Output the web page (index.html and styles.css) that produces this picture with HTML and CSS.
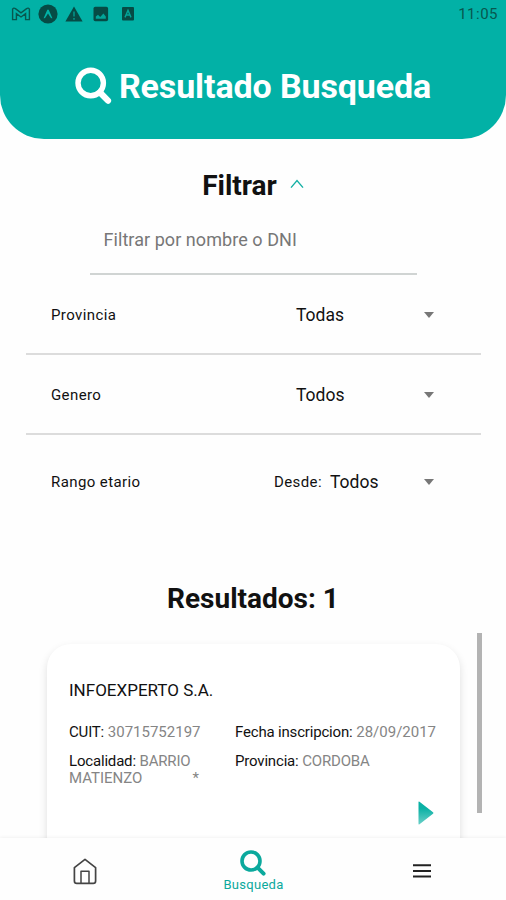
FILE: index.html
```html
<!DOCTYPE html>
<html lang="es">

<head>
  <meta charset="utf-8">
  <title>Resultado Busqueda</title>
  <link rel="stylesheet" href="styles.css">
</head>

<body>
  <div class="app">
    <header class="header">
      <div class="status">
        <div class="status-icons">
          <svg width="20" height="16" viewBox="0 0 20 16" fill="none" stroke="#07574f" stroke-width="1.4">
            <path d="M1.6 13.6V3.2Q2.6 1.4 4.4 2.6L10 6.8L15.6 2.6Q17.4 1.4 18.4 3.2V13.6H14.6V7.6L10 11L5.4 7.6V13.6Z" />
          </svg>
          <svg width="20" height="20" viewBox="0 0 20 20">
            <circle cx="10" cy="10" r="9.6" fill="#064b45" />
            <path d="M5.6 14.2L9.2 6Q10 5 10.8 6L14.4 14.2Q13 14.8 12.4 13.2L10 9.6L7.6 13.2Q7 14.8 5.6 14.2Z" fill="#02b1a6" />
          </svg>
          <svg width="18" height="16" viewBox="0 0 18 16">
            <path d="M9 .5L17.6 15.5H.4Z" fill="#064b45" />
            <path d="M9 5.5V10.5M9 12V13.8" stroke="#02a498" stroke-width="1.3" />
          </svg>
          <svg width="16" height="16" viewBox="0 0 16 16">
            <rect x=".5" y=".8" width="14.6" height="14.4" rx="1.8" fill="#064b45" />
            <path d="M2.8 12.8V10.4L5 8.8L7.2 11L10.4 7.6L12.8 10.4V12.8Z" fill="#02a498" />
          </svg>
          <svg width="12" height="14" viewBox="0 0 12 14">
            <rect width="12" height="13.6" rx="1" fill="#064b45" />
            <path d="M3 10.4L6 3.4L9 10.4M4.2 8H7.8" fill="none" stroke="#02a498" stroke-width="1.4" />
          </svg>
        </div>
        <span class="clock">11:05</span>
      </div>
      <div class="title">
        <svg width="37" height="38" viewBox="0 0 37 38" fill="none" stroke="#fff">
          <circle cx="15.7" cy="16" r="12.7" stroke-width="5.4" />
          <path d="M25 25.5L33 33.7" stroke-width="6.2" stroke-linecap="round" />
        </svg>
        <h1>Resultado Busqueda</h1>
      </div>
    </header>

    <main class="content">
      <div class="filter-title">
        <h2>Filtrar</h2>
        <svg width="14" height="10" viewBox="0 0 14 10" fill="none" stroke="#14b0a4" stroke-width="1.4">
          <path d="M1 8.6L7 1.6L13 8.6" />
        </svg>
      </div>
      <input class="search" type="text" placeholder="Filtrar por nombre o DNI">

      <div class="row">
        <span class="label">Provincia</span>
        <div class="select"><span>Todas</span><i class="arrow"></i></div>
      </div>
      <div class="row">
        <span class="label">Genero</span>
        <div class="select"><span>Todos</span><i class="arrow"></i></div>
      </div>
      <div class="row row-age">
        <span class="label">Rango etario</span>
        <span class="from">Desde:</span>
        <div class="select"><span>Todos</span><i class="arrow"></i></div>
      </div>

      <h2 class="results-title">Resultados: 1</h2>
      <div class="results">
        <div class="card">
          <h3>INFOEXPERTO S.A.</h3>
          <div class="data">
            <p><b>CUIT:</b> 30715752197</p>
            <p><b>Fecha inscripcion:</b> 28/09/2017</p>
            <p><b>Localidad:</b> <span class="place">BARRIO</span><br><span class="split"><span>MATIENZO</span><span>*</span></span></p>
            <p><b>Provincia:</b> <span class="place">CORDOBA</span></p>
          </div>
          <svg class="play" width="16" height="24" viewBox="0 0 16 24">
            <defs>
              <linearGradient id="teal" x1="0" y1="0" x2="0" y2="1">
                <stop offset="0.3" stop-color="#0bb1a5" />
                <stop offset="1" stop-color="#6bd0c8" />
              </linearGradient>
            </defs>
            <path d="M.5 1.2Q.5 0 1.5 .8L15 11.2Q16 12 15 12.8L1.5 23.2Q.5 24 .5 22.8Z" fill="url(#teal)" />
          </svg>
        </div>
        <div class="scrollbar"></div>
      </div>
    </main>

    <nav class="nav">
      <a class="nav-item">
        <svg width="24" height="27" viewBox="0 0 24 27" fill="none" stroke="#444" stroke-width="1.7" stroke-linejoin="round">
          <path d="M1.4 9.6L12 1.4L22.6 9.6V23Q22.6 25.4 20.2 25.4H3.8Q1.4 25.4 1.4 23Z" />
          <path d="M8 25V13.2H16V25" stroke-width="1.5" />
        </svg>
      </a>
      <a class="nav-item active">
        <svg width="26" height="26" viewBox="0 0 26 26" fill="none" stroke="#0ba99d">
          <circle cx="11" cy="11" r="9" stroke-width="3.6" />
          <path d="M17.6 17.6L23.6 23.6" stroke-width="4" stroke-linecap="round" />
        </svg>
        <span>Busqueda</span>
      </a>
      <a class="nav-item">
        <svg width="18" height="14" viewBox="0 0 18 14" stroke="#222" stroke-width="2">
          <path d="M0 1.3H18M0 7H18M0 12.6H18" />
        </svg>
      </a>
    </nav>
  </div>
</body>

</html>
```

FILE: styles.css
```css
* {
  box-sizing: border-box;
}

body {
  margin: 0;
  font-family: Roboto, "Liberation Sans", sans-serif;
  color: #111;
  background-color: #fefefe;
}

h1, h2, h3, p {
  margin: 0;
}

svg {
  display: block;
  flex: none;
}

.app {
  display: flex;
  flex-direction: column;
  height: 900px;
  overflow: hidden;
}

.header {
  flex: none;
  height: 139px;
  background-color: #02b1a6;
  border-radius: 0 0 44px 44px;
}

.status {
  display: flex;
  justify-content: space-between;
  align-items: center;
  height: 28px;
  padding: 0 8px 0 11px;
}

.status-icons {
  display: flex;
  align-items: center;
}

.status-icons svg {
  margin-right: 7px;
}

.status-icons svg:nth-child(3) {
  margin-right: 10px;
}

.status-icons svg:nth-child(4) {
  margin-right: 13px;
}

.clock {
  font-size: 15px;
  letter-spacing: 0.5px;
  color: #07574f;
}

.title {
  display: flex;
  justify-content: center;
  align-items: center;
  gap: 7px;
  height: 115px;
}

.title h1 {
  font-size: 34px;
  line-height: 38px;
  letter-spacing: -0.12px;
  color: #fff;
  white-space: nowrap;
}

.content {
  flex: 1;
  min-height: 0;
  display: flex;
  flex-direction: column;
  overflow: hidden;
}

.filter-title {
  display: flex;
  justify-content: center;
  align-items: center;
  gap: 13px;
  height: 68px;
  padding-top: 25px;
}

.filter-title h2,
.results-title {
  font-size: 28px;
  line-height: 34px;
}

.filter-title svg {
  margin-bottom: 3px;
}

.search {
  flex: none;
  align-self: center;
  width: 327px;
  height: 68px;
  padding: 0 14px 2px;
  border: none;
  border-bottom: 2px solid #d0d4d3;
  background: none;
  font: 18px Roboto, "Liberation Sans", sans-serif;
  letter-spacing: 0.06px;
}

.search::placeholder {
  color: #777;
}

.row {
  flex: none;
  display: flex;
  align-items: center;
  height: 80px;
  margin: 0 25px 0 26px;
  padding: 2px 46px 0 25px;
  border-bottom: 2px solid #dcdcdc;
}

.row-age.row {
  height: 93px;
  padding-top: 0;
  border: none;
}

.label,
.from {
  font-size: 15px;
  letter-spacing: 0.4px;
}

.label {
  flex: 1;
}

.from {
  margin-right: 8px;
}

.select {
  display: flex;
  align-items: center;
  justify-content: space-between;
  width: 139px;
  font-size: 17.5px;
}

.row-age .select {
  width: 105px;
}

.arrow {
  margin-right: 1px;
  border: 5px solid transparent;
  border-top: 6px solid #777;
  border-bottom: none;
}

.results-title {
  margin-top: 54px;
  text-align: center;
}

.results {
  flex: 1;
  min-height: 0;
  display: flex;
  justify-content: space-between;
  margin-top: 17px;
  padding: 0 24px 0 47px;
}

.card {
  width: 413px;
  height: 220px;
  margin-top: 11px;
  padding: 35px 22px 0;
  border-radius: 24px;
  background-color: #fff;
  box-shadow: 0 4px 8px rgba(0, 0, 0, 0.13);
}

.card h3 {
  font-size: 17px;
  line-height: 22px;
  font-weight: 400;
}

.data {
  display: grid;
  grid-template-columns: 166px auto;
  row-gap: 12px;
  margin-top: 23px;
  font-size: 15px;
  line-height: 17px;
  color: #858585;
  white-space: nowrap;
}

.data b {
  font-weight: 400;
  letter-spacing: -0.18px;
  color: #111;
}

.place {
  letter-spacing: -0.2px;
}

.split {
  display: flex;
  justify-content: space-between;
  width: 130px;
}

.play {
  margin: 14px 4px 0 auto;
}

.scrollbar {
  width: 5px;
  height: 180px;
  background-color: #b3b3b3;
}

.nav {
  flex: none;
  z-index: 1;
  display: grid;
  grid-template-columns: repeat(3, 1fr);
  height: 62px;
  padding: 4px 0 0 1px;
  background-color: #fefefe;
  box-shadow: 0 -1px 3px rgba(0, 0, 0, 0.05);
}

.nav-item {
  display: flex;
  flex-direction: column;
  align-items: center;
  justify-content: center;
}

.active {
  gap: 1px;
  font-size: 13px;
  line-height: 15px;
  letter-spacing: 0.3px;
  color: #0ba99d;
}
```
